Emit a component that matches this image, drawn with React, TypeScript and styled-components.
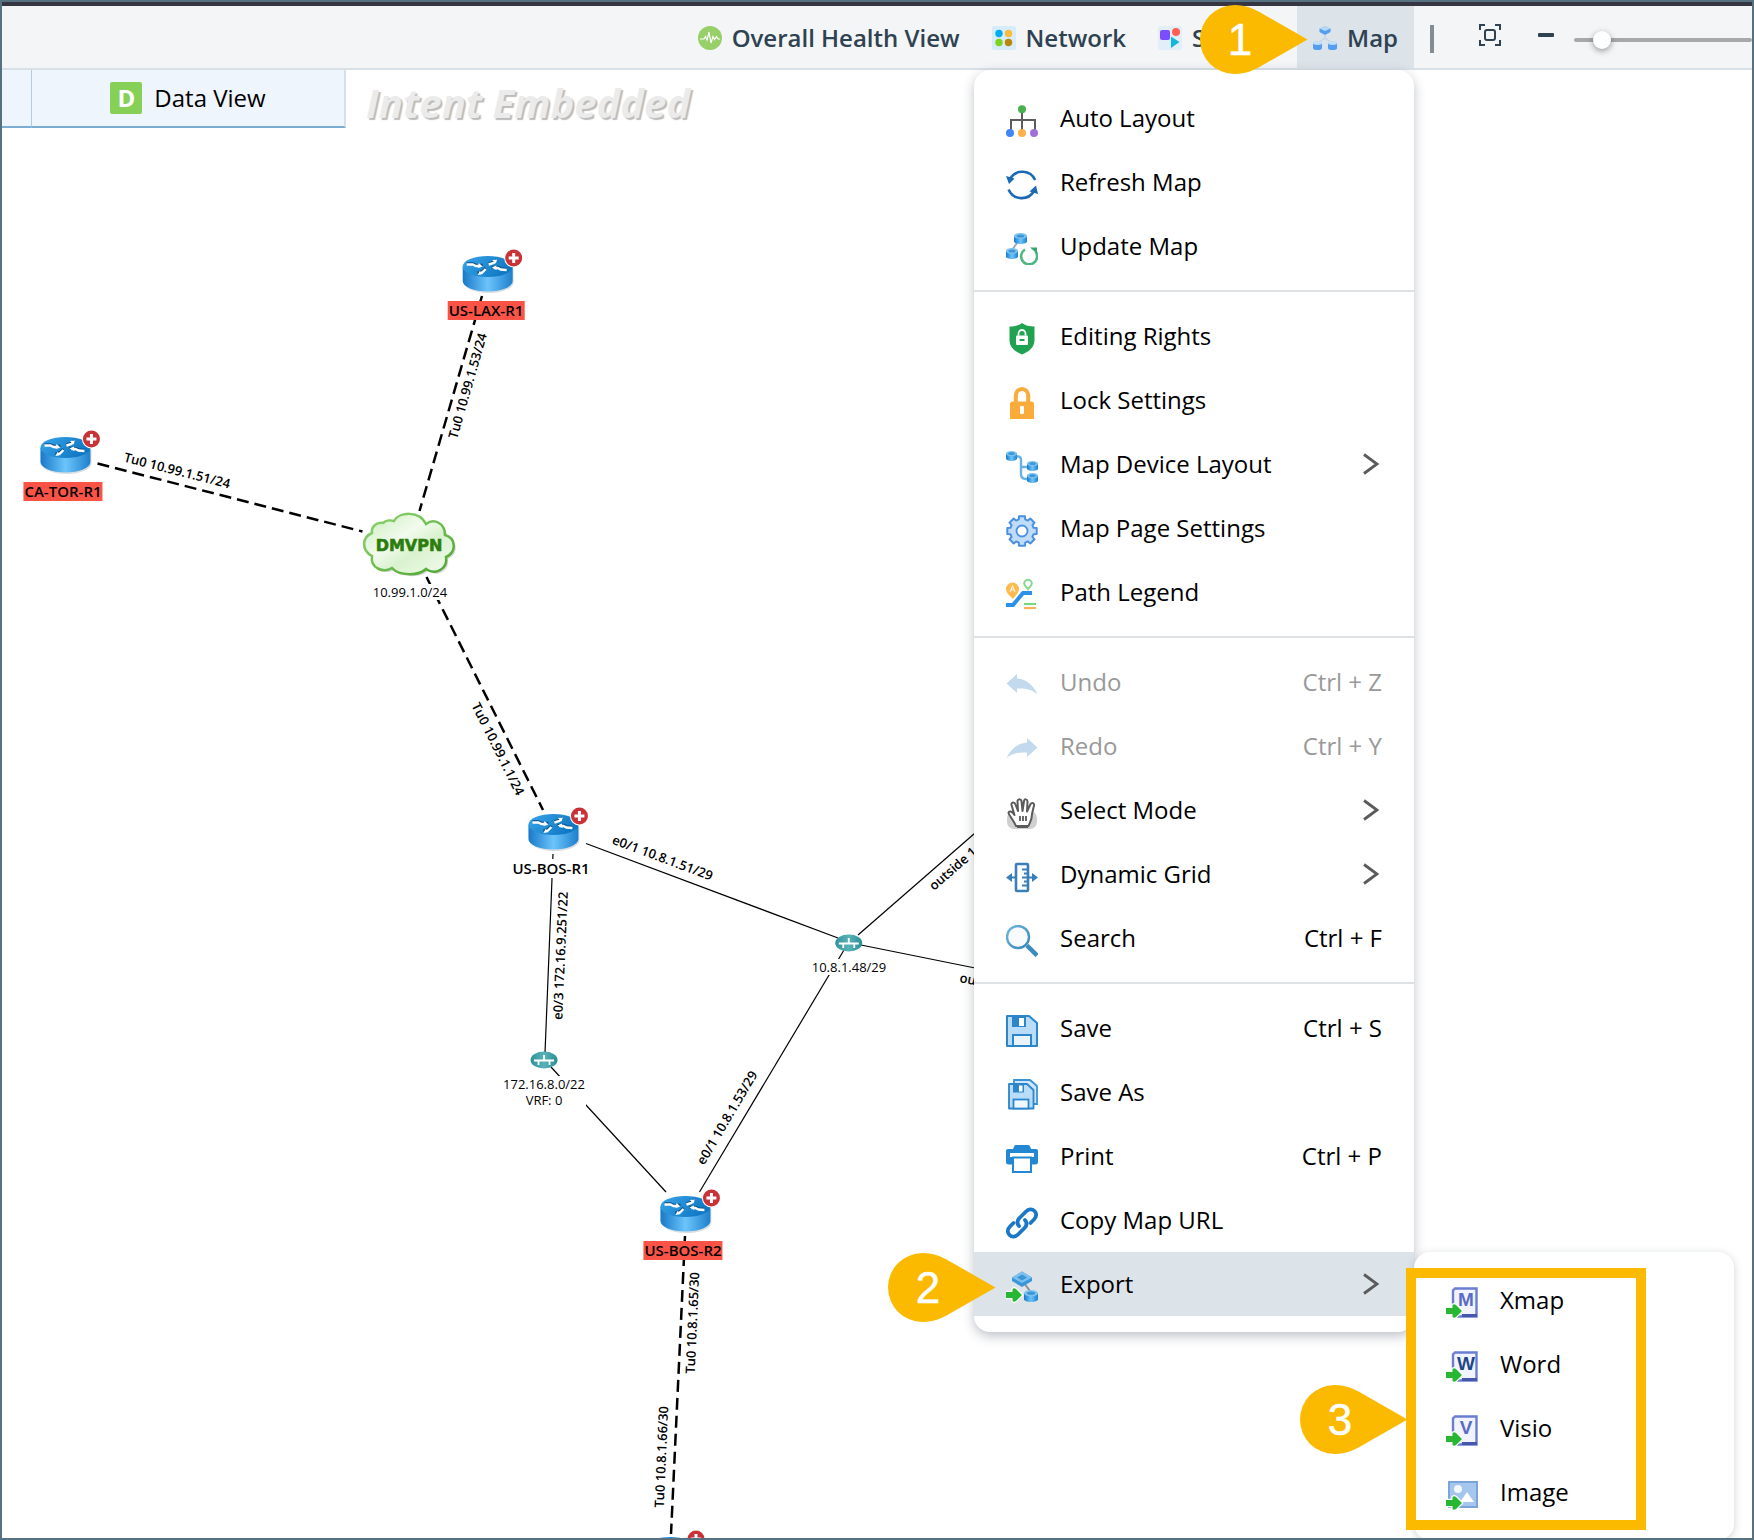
import React from 'react';
import styled, { createGlobalStyle, css } from 'styled-components';

const GlobalStyle = createGlobalStyle`
  *, *::before, *::after { box-sizing: border-box; }
  body { margin: 0; background: #fff; }
  button, input { font: inherit; color: inherit; }
  ul { list-style: none; margin: 0; padding: 0; }
`;

const sans = '"Open Sans", "Noto Sans", sans-serif';
const amber = '#fbb900';

const Page = styled.div`
  position: relative;
  display: flex;
  flex-direction: column;
  height: 100vh;
  padding: 2px;
  overflow: hidden;
  background: #fff;
  color: #000;
  font-family: ${sans};
  font-size: 24px;
  line-height: 32px;
  &::after {
    content: '';
    position: absolute;
    inset: 0;
    z-index: 9;
    border: 2px solid #56717f;
    pointer-events: none;
  }
`;

const Toolbar = styled.header`
  position: relative;
  z-index: 2;
  display: flex;
  justify-content: flex-end;
  height: 68px;
  border-top: 4px solid #363642;
  border-bottom: 2px solid #d9e1e8;
  background: #f3f5f7;
  color: #2f4251;
  font-weight: 600;
`;

const ToolNav = styled.nav`
  display: flex;
`;

const ToolButton = styled.button<{ $active?: boolean; $wide?: boolean }>`
  display: flex;
  align-items: center;
  gap: 10px;
  height: 100%;
  min-width: ${(p) => (p.$wide ? '155px' : '0')};
  padding: 2px 16px 0;
  border: 0;
  background: ${(p) => (p.$active ? '#dce3e9' : 'transparent')};
  white-space: nowrap;
`;

const Anchor = styled.div`
  position: relative;
`;

const ZoomGroup = styled.div`
  display: flex;
  align-items: center;
  flex: none;
  width: 338px;
  padding-left: 16px;
`;

const Divider = styled.span`
  width: 4px;
  height: 28px;
  margin: 4px 45px 0 0;
  background: #848d94;
`;

const IconButton = styled.button`
  display: flex;
  padding: 0;
  border: 0;
  background: none;
`;

const FitButton = styled(IconButton)`
  margin: 0 37px 4px 0;
`;

const MinusButton = styled(IconButton)`
  margin: 0 20px 4px 0;
`;

const Slider = styled.input`
  flex: 1;
  min-width: 0;
  height: 24px;
  margin: 6px 0 0;
  appearance: none;
  background: none;
  &::-webkit-slider-runnable-track {
    height: 4px;
    border-radius: 2px;
    background: #a6a8a9;
  }
  &::-webkit-slider-thumb {
    appearance: none;
    width: 18px;
    height: 18px;
    margin-top: -7px;
    border-radius: 9px;
    background: #fff;
    box-shadow: 0 2px 6px rgba(0, 0, 0, 0.4);
  }
`;

const Subheader = styled.div`
  position: relative;
  z-index: 1;
  display: flex;
  align-items: flex-start;
`;

const Tab = styled.button<{ $stub?: boolean }>`
  display: flex;
  align-items: center;
  justify-content: center;
  gap: 12px;
  width: ${(p) => (p.$stub ? '30px' : '314px')};
  height: 58px;
  padding: 0;
  border: 0;
  border-right: ${(p) => (p.$stub ? '1px solid #adcbe2' : '2px solid #d5e1ea')};
  border-bottom: 2px solid #7badd5;
  background: #eef5fc;
`;

const TabBadge = styled.span`
  display: grid;
  place-items: center;
  width: 32px;
  height: 32px;
  border-radius: 2px;
  background: #87d058;
  color: #fff;
  font-weight: 700;
`;

const Watermark = styled.span`
  margin-left: 20px;
  padding-top: 6px;
  color: #ebebeb;
  font-size: 40px;
  font-style: italic;
  font-weight: 700;
  line-height: 54px;
  text-shadow: 2px 2px 1px #bcbcbc;
`;

/* ---------- menus ---------- */

const panel = css`
  position: absolute;
  padding: 16px 0;
  border-radius: 16px;
  background: #fff;
  box-shadow: 0 4px 12px rgba(40, 50, 70, 0.3);
  color: #000;
  font-weight: 400;
`;

const Menu = styled.div`
  ${panel}
  top: calc(100% + 2px);
  right: 0;
  width: 440px;
`;

const Submenu = styled.ul`
  &&& {
    ${panel}
    top: 0;
    left: 100%;
    width: 320px;
    box-shadow: 0 2px 8px rgba(40, 50, 70, 0.22);
  }
`;

const MenuGroup = styled.ul`
  & + & {
    margin-top: 12px;
    padding-top: 12px;
    border-top: 2px solid #dee2e5;
  }
`;

const MenuRow = styled.li`
  position: relative;
`;

const MenuButton = styled.button<{ $active?: boolean }>`
  display: flex;
  align-items: center;
  gap: 22px;
  width: 100%;
  height: 64px;
  padding: 0 32px;
  border: 0;
  background: ${(p) => (p.$active ? '#dce3e9' : 'transparent')};
  text-align: left;
  &:disabled {
    color: #999;
  }
`;

const MenuIcon = styled.span`
  display: flex;
  padding-top: 6px;
`;

const MenuLabel = styled.span`
  flex: 1;
`;

const Chevron = styled.span`
  display: flex;
  margin-right: 3px;
`;

/* ---------- callouts ---------- */

const Pin = styled.span<{ $left: number; $top: number }>`
  position: absolute;
  z-index: 4;
  left: ${(p) => p.$left}px;
  top: ${(p) => p.$top}px;
  display: flex;
  pointer-events: none;
`;

const Highlight = styled.li`
  position: absolute;
  inset: 16px 88px 10px -8px;
  border: 10px solid ${amber};
  pointer-events: none;
`;

/* ---------- topology ---------- */

const Topology = styled.main`
  position: absolute;
  inset: 0;
  overflow: hidden;
`;

const Links = styled.svg`
  position: absolute;
  inset: 0;
  width: 100%;
  height: 100%;
`;

const LinkText = styled.text`
  font-size: 13px;
  font-weight: 600;
`;

const Node = styled.div<{ $x: number; $y: number }>`
  position: absolute;
  left: ${(p) => p.$x}px;
  top: ${(p) => p.$y}px;
  display: flex;
  flex-direction: column;
  align-items: center;
  gap: 7px;
  transform: translateX(-50%);
`;

const DeviceName = styled.span<{ $alert?: boolean }>`
  margin-right: 8px;
  padding: 0 1px;
  background: ${(p) => (p.$alert ? '#fc5347' : '#fff')};
  font-size: 15px;
  font-weight: 600;
  line-height: 19px;
  white-space: nowrap;
`;

const SubnetName = styled.span`
  padding: 0 1px;
  background: #fff;
  font-size: 13px;
  line-height: 16px;
  text-align: center;
  white-space: pre;
`;

/* ---------- drawings ---------- */

const Svg = ({ children, size = 32 }: { children: React.ReactNode; size?: number }) => (
  <svg width={size} height={size} viewBox={`0 0 ${size} ${size}`} fill="none" aria-hidden="true">
    {children}
  </svg>
);

const Gradients = styled.svg`
  position: absolute;
`;

const Defs = () => (
  <Gradients width="0" height="0" aria-hidden="true">
    <defs>
      <linearGradient id="side" x1="0" x2="1" y1="0" y2="0">
        <stop offset="0" stopColor="#1879c8" />
        <stop offset="0.5" stopColor="#6cc4fb" />
        <stop offset="1" stopColor="#1d80cc" />
      </linearGradient>
      <linearGradient id="lid" x1="0" x2="1" y1="0" y2="0.4">
        <stop offset="0" stopColor="#38a5e8" />
        <stop offset="1" stopColor="#0f78c4" />
      </linearGradient>
      <linearGradient id="cloud" x1="0" x2="1" y1="0" y2="1">
        <stop offset="0" stopColor="#c8edb8" />
        <stop offset="0.4" stopColor="#f2fbee" />
        <stop offset="0.6" stopColor="#d9f2ce" />
        <stop offset="1" stopColor="#f4fcf0" />
      </linearGradient>
      <linearGradient id="cloudEdge" x1="0" x2="1" y1="0" y2="1">
        <stop offset="0" stopColor="#8fd472" />
        <stop offset="1" stopColor="#4da52f" />
      </linearGradient>
      <linearGradient id="teal" x1="0" x2="1" y1="0" y2="0">
        <stop offset="0" stopColor="#2f9299" />
        <stop offset="0.5" stopColor="#58b3b8" />
        <stop offset="1" stopColor="#2b8d94" />
      </linearGradient>
      <linearGradient id="lens" x1="0" x2="1" y1="0" y2="1">
        <stop offset="0" stopColor="#6cb8e0" />
        <stop offset="1" stopColor="#3585b8" />
      </linearGradient>
    </defs>
  </Gradients>
);

const Drum = ({ x, y, w = 12, h = 10 }: { x: number; y: number; w?: number; h?: number }) => (
  <g transform={`translate(${x} ${y})`}>
    <path d={`M0 ${h * 0.25} V${h * 0.78} A${w / 2} ${h * 0.22} 0 0 0 ${w} ${h * 0.78} V${h * 0.25} Z`} fill="url(#side)" />
    <ellipse cx={w / 2} cy={h * 0.27} rx={w / 2} ry={h * 0.27} fill="#7cc3f2" />
    <ellipse cx={w / 2} cy={h * 0.27} rx={w / 3.4} ry={h * 0.14} fill="#3c96d8" />
  </g>
);

const GreenArrow = () => (
  <path
    d="M0 21 H6.500 V18 Q8 16.500 10 18 L16 24 L10 30 Q8 31.500 6.500 30 V27 H0 Z"
    fill="#27b732"
    stroke="#fff"
    strokeWidth="2.400"
    paintOrder="stroke"
  />
);

const gearPath = (() => {
  const pts: string[] = [];
  for (let i = 0; i < 8; i += 1) {
    const base = (i * Math.PI) / 4 - Math.PI / 2;
    [[-0.27, 12], [-0.2, 15], [0.2, 15], [0.27, 12]].forEach(([a, r]) => {
      pts.push(`${(16 + r * Math.cos(base + a)).toFixed(1)} ${(16 + r * Math.sin(base + a)).toFixed(1)}`);
    });
  }
  return `M${pts.join(' L')} Z`;
})();

const Doc = ({ letter, ink }: { letter: string; ink: string }) => (
  <Svg>
    <path d="M9 1.5 H30.5 V29.5 H7 V3.5 Z" fill="#f1f4ff" stroke="#6a7dd0" strokeWidth="2.4" />
    <path d="M16 28.5 H31" stroke="#4657b0" strokeWidth="3" />
    <text x="20" y="19" textAnchor="middle" fontFamily="Liberation Sans, sans-serif" fontSize="19" fontWeight="700" fill={ink}>
      {letter}
    </text>
    <GreenArrow />
  </Svg>
);

const icons = {
  auto: (
    <Svg>
      <path d="M16 6 V26 M5 26 V15 H29 V26" stroke="#5c5c5c" strokeWidth="2" />
      <circle cx="16" cy="4.2" r="4" fill="#4caf50" />
      <circle cx="4" cy="28" r="4" fill="#4285f4" />
      <circle cx="16" cy="28" r="4" fill="#ffb04a" />
      <circle cx="28" cy="28" r="4" fill="#a070d8" />
    </Svg>
  ),
  refresh: (
    <Svg>
      <path d="M4.2 9.5 A14.2 14.2 0 0 1 29.2 11 M2.6 20.5 A14.2 14.2 0 0 0 28 22" stroke="#1b69b6" strokeWidth="2.6" />
      <path d="M0 7 L8.5 9.5 L3 15 Z M32 25 L23.5 22.500 L30 16.500 Z" fill="#1b69b6" />
    </Svg>
  ),
  update: (
    <Svg>
      <path d="M11 10 L6 17" stroke="#9ab" strokeWidth="2" />
      <Drum x={8} y={0} w={13} h={11} />
      <Drum x={0} y={15} w={12} h={11} />
      <path d="M19 16.500 A8 8 0 1 0 29.500 18.500" stroke="#4fb783" strokeWidth="2.600" />
      <path d="M24 14.500 H31 V20.500 Z" fill="#35a56f" />
    </Svg>
  ),
  shield: (
    <Svg>
      <path d="M16 0 C19 2.500 23 3.500 28.500 3.500 V17 C28.500 25 22 29 16 31.500 C10 29 3.500 25 3.500 17 V3.500 C9 3.500 13 2.500 16 0 Z" fill="#1fa350" />
      <path d="M12.500 12.500 V10.500 A3.500 3.500 0 0 1 19.500 10.500 V12.500" stroke="#fff" strokeWidth="1.800" />
      <rect x="10" y="12.500" width="12" height="9.500" rx="1" fill="#fff" />
      <path d="M13.500 17 H18.500" stroke="#1fa350" strokeWidth="2" />
    </Svg>
  ),
  lock: (
    <Svg>
      <path d="M9.800 16 V8.500 A6.200 6.500 0 0 1 22.200 8.500 V16" stroke="#fbab3a" strokeWidth="4" />
      <path d="M4 17 Q4 14.500 6.500 14.500 H25.500 Q28 14.500 28 17 V32 H4 Z" fill="#fbab3a" />
      <rect x="14" y="19" width="4" height="8" rx="1" fill="#fff" />
    </Svg>
  ),
  layout: (
    <Svg>
      <path d="M9 5.500 H12 Q15 5.500 15 9 V23 Q15 28 20 28 H24 M15 16 H24" stroke="#69b3e4" strokeWidth="2.400" />
      <Drum x={0} y={0} w={11} h={10} />
      <Drum x={21} y={10} w={11} h={10} />
      <Drum x={21} y={22} w={11} h={10} />
    </Svg>
  ),
  gear: (
    <Svg>
      <path d={gearPath} fill="#bfdcfa" stroke="#4b90e0" strokeWidth="2" strokeLinejoin="round" />
      <circle cx="16" cy="16" r="5.500" fill="#fff" stroke="#4b90e0" strokeWidth="1.800" />
    </Svg>
  ),
  path: (
    <Svg>
      <path d="M6.500 3.500 A6.500 6.500 0 0 1 13 10 C13 14 9 17 7 20 C4 17 0 14 0 10 A6.500 6.500 0 0 1 6.500 3.500 Z" fill="#fdbb4d" />
      <path d="M4 13 L6.500 7 L9 13 M5 11 H8" stroke="#fff3dc" strokeWidth="1.200" />
      <path d="M22 0.800 A3.800 3.800 0 0 1 25.800 4.600 C25.800 7 23 8 22 10 C21 8 18.200 7 18.200 4.600 A3.800 3.800 0 0 1 22 0.800 Z" stroke="#86d88f" strokeWidth="2" />
      <path d="M0 26 H7 L17 14 H26" stroke="#2992e6" strokeWidth="4" />
      <path d="M18 25 H30" stroke="#7bd67e" strokeWidth="2.200" />
      <path d="M18 29 H30" stroke="#f9b25c" strokeWidth="2.200" />
    </Svg>
  ),
  undo: (
    <Svg>
      <path d="M0.500 14.500 L11 5 V9.500 C20 10 27 16 31.500 25 C25 20 19 19 11 19.500 V24 Z" fill="#c3daee" />
    </Svg>
  ),
  redo: (
    <Svg>
      <path d="M31.500 14.500 L21 5 V9.500 C12 10 5 16 0.500 25 C7 20 13 19 21 19.500 V24 Z" fill="#c3daee" />
    </Svg>
  ),
  hand: (
    <Svg>
      <rect x="1" y="14" width="30" height="18" rx="7" fill="#d0d0d0" />
      <path
        d="M10 29 C8 24 3.500 19 2.500 16 C3 13.500 6 14 8.500 18 L5.500 8 C5 5 8.500 4.500 9.500 7.500 L12 14 L11.500 4 C12 1.500 15 1.500 15.500 4 L16.500 14 L18 4 C18.500 1.500 21.500 2 21.500 4.500 L21 14.500 L24.500 7 C26 5 28.500 6 28 8.500 L26 17 C26 23 24 25 22.500 29 Z"
        fill="#fff"
        stroke="#5a5a5a"
        strokeWidth="2"
        strokeLinejoin="round"
      />
      <path d="M14 19 V24 M17 19 V24 M20 19 V24 M11 30 H22" stroke="#5a5a5a" strokeWidth="1.800" />
    </Svg>
  ),
  grid: (
    <Svg>
      <rect x="10" y="3" width="12" height="27" rx="1" stroke="#3b7fb8" strokeWidth="2.600" />
      <path d="M16 8.500 H22 M18 12.500 H22 M16 16.500 H22 M18 20.500 H22 M16 24.500 H22" stroke="#3b7fb8" strokeWidth="1.800" />
      <path d="M3 16.500 H10 M22 16.500 H29" stroke="#3b7fb8" strokeWidth="2" />
      <path d="M0 16.500 L6 12 V21 Z M32 16.500 L26 12 V21 Z" fill="#3b7fb8" />
    </Svg>
  ),
  search: (
    <Svg>
      <path d="M21 20.500 L31 30.500" stroke="#3d8bbd" strokeWidth="4.500" />
      <circle cx="12" cy="12" r="11" fill="#f7fbfe" stroke="url(#lens)" strokeWidth="2.400" />
    </Svg>
  ),
  save: (
    <Svg>
      <path d="M1 1 H23 L31 8 V31 H1 Z" fill="#b9dcfb" stroke="#2b86cc" strokeWidth="2" strokeLinejoin="round" />
      <path d="M6 1 H20 V12 H6 Z" fill="#2b86cc" />
      <rect x="13" y="3" width="5" height="8" fill="#fff" />
      <rect x="7" y="20" width="18" height="11" fill="#e9f4fe" stroke="#2b86cc" strokeWidth="2" />
    </Svg>
  ),
  saveAs: (
    <Svg>
      <path d="M8 5 V1 H24 L31 7 V25 H27" fill="#cfe6fb" stroke="#3b93d6" strokeWidth="1.800" />
      <path d="M3 5 H21 L27.500 11 V29.500 H3 Z" fill="#b9dcfb" stroke="#2b86cc" strokeWidth="1.800" strokeLinejoin="round" />
      <path d="M7 5 H18 V13.500 H7 Z" fill="#2b86cc" />
      <rect x="13" y="6.500" width="3.500" height="6" fill="#fff" />
      <rect x="7.500" y="20.500" width="15" height="9" fill="#f0f8ff" stroke="#2b86cc" strokeWidth="1.800" />
    </Svg>
  ),
  print: (
    <Svg>
      <path d="M8 4 Q8 2 10 2 H22 Q24 2 25 6 H30 Q32 6 32 8 V19 Q32 21.500 29 21.500 H3 Q0 21.500 0 19 V8 Q0 6 2 6 H7 Z" fill="#2387d2" />
      <path d="M4 10 H28 V14 H4 Z" fill="#fff" />
      <rect x="7" y="14.500" width="18" height="14.500" fill="#fff" stroke="#2387d2" strokeWidth="2" />
    </Svg>
  ),
  link: (
    <Svg>
      <g stroke="#1a78c8" strokeWidth="3.800" strokeLinecap="round">
        <path d="M13 19 C10.500 16 11.500 13 13.500 11 L20 4.500 C22.500 2 26 1.500 28.500 4 C31 6.500 30.500 10 28 12.500 L24.500 16" />
        <path d="M19 13 C21.500 16 20.500 19 18.500 21 L12 27.500 C9.500 30 6 30.500 3.500 28 C1 25.500 1.500 22 4 19.500 L7.500 16" />
      </g>
    </Svg>
  ),
  export: (
    <Svg>
      <path d="M18 12 L24 20" stroke="#8a8f96" strokeWidth="2" />
      <path d="M6 6.500 L16 0.500 L26 6.500 V10 L16 16 L6 10 Z" fill="#3a96da" />
      <path d="M6 6.500 L16 0.500 L26 6.500 L16 12 Z" fill="#7dc0ee" />
      <path d="M11 6.500 L16 3.500 L21 6.500 L16 9.500 Z" fill="#3a96da" />
      <Drum x={18} y={19} w={14} h={12} />
      <GreenArrow />
    </Svg>
  ),
  xmap: <Doc letter="M" ink="#5a6cc4" />,
  word: <Doc letter="W" ink="#1f4788" />,
  visio: <Doc letter="V" ink="#5a6cc4" />,
  image: (
    <Svg>
      <rect x="3" y="3" width="28" height="25" fill="#a5c6ee" stroke="#7ba4d8" strokeWidth="2" />
      <circle cx="12" cy="10" r="4" fill="#f4f9ff" />
      <path d="M14 23 L21 13 L28 23 Z" fill="#fff" />
      <GreenArrow />
    </Svg>
  ),
};

const health = (
  <Svg size={24}>
    <circle cx="12" cy="12" r="12" fill="#97cf68" />
    <path d="M2 13 H6 L7.500 10.500 L9 14 L11 6 L13 17 L15 10.500 L16.500 13.500 L18.500 10.500 L20 13 H22" stroke="#fff" strokeWidth="1.200" />
  </Svg>
);
const network = (
  <Svg size={24}>
    <rect width="24" height="24" rx="2" fill="#d6ecf8" />
    <circle cx="7" cy="7.500" r="3.700" fill="#00aeef" />
    <circle cx="16.500" cy="7.500" r="3.700" fill="#fdb93a" />
    <circle cx="7" cy="16.500" r="3.700" fill="#7ed321" />
    <circle cx="16.500" cy="16.500" r="3.700" fill="#b8860b" />
  </Svg>
);
const shapes = (
  <Svg size={24}>
    <rect width="24" height="24" rx="2" fill="#e2effb" />
    <rect x="2" y="4" width="10" height="10" rx="2" fill="#7c4dff" />
    <circle cx="18" cy="6" r="4" fill="#ff5f52" />
    <path d="M13 10.500 L21.500 16 L13 22 Z" fill="#12b5dc" />
  </Svg>
);
const mapIcon = (
  <Svg size={24}>
    <path d="M12 9 V12 L5 17 M12 12 L19 17" stroke="#b9cfe6" strokeWidth="1" />
    <path d="M6.500 2.500 L12 0.500 L17.500 2.500 V6 L12 9 L6.500 6 Z" fill="#559df0" />
    <path d="M6.500 2.500 L12 0.500 L17.500 2.500 L12 5 Z" fill="#b5d8fb" />
    {[0, 15].map((x) => (
      <g key={x} transform={`translate(${x} 15)`}>
        <path d="M0 2 V7 A4.500 2 0 0 0 9 7 V2 Z" fill="#559df0" />
        <ellipse cx="4.500" cy="2" rx="4.500" ry="1.900" fill="#c3dffb" />
      </g>
    ))}
  </Svg>
);

const Callout = ({ n, left, top }: { n: number; left: number; top: number }) => (
  <Pin $left={left} $top={top}>
    <svg width="108" height="69" viewBox="0 0 108 69">
      <path d="M34.500 0 C46 0 54 4 62 8.500 L107.500 34.500 L62 60.500 C54 65 46 69 34.500 69 A34.500 34.500 0 0 1 34.500 0 Z" fill={amber} />
      <text x="40" y="50" textAnchor="middle" fontFamily="Liberation Sans, Arial, sans-serif" fontSize="44" fontWeight="400" fill="#fff" stroke="#fff" strokeWidth="0.500">
        {n}
      </text>
    </svg>
  </Pin>
);

const RouterArt = () => (
  <svg width="70" height="46" viewBox="-8 -8 70 46" aria-hidden="true">
    <path d="M1 13 V26 A25 10.500 0 0 0 51 27 V13 Z" fill="#9aa4ad" opacity="0.35" />
    <path d="M0 11 V25 A25 10.500 0 0 0 50 25 V11 Z" fill="url(#side)" />
    <ellipse cx="25" cy="10.500" rx="25" ry="10.500" fill="url(#lid)" />
    <g fill="none" stroke="#0d4f86" strokeWidth="2.600" transform="translate(0 -1)">
      <path d="M4 8.500 L10 8.500 L13 10 L20 10 M44 14 L38 13.500 L35 12 L29 12 M26 8.500 L31 7 L34 4.500 M23 13 L20 16 L15 18" />
    </g>
    <g fill="none" stroke="#fff" strokeWidth="2.400">
      <path d="M4 8.500 L10 8.500 L13 10 L18 10 M44 14 L38 13.500 L35 12 L31 12 M26 8.500 L31 7 L33 5 M23 13 L20 16 L17 17.500" />
    </g>
    <path d="M16 7 L20 10.500 L15 12 Z M29 11.500 L33.500 9.500 L34 14 Z M34.500 3.500 L29.500 4 L33 7.500 Z M15 19 L20.500 18 L17 15 Z" fill="#fff" />
    <circle cx="51" cy="2" r="9.500" fill="#fff" />
    <circle cx="51" cy="2" r="8.500" fill="#c93236" />
    <path d="M51 -3 V7 M46 2 H56" stroke="#fff" strokeWidth="3" />
  </svg>
);

const cloudOutline =
  'M21 12 C24 9 29 9 32 10 C37 1 57 -1 64 13 C72 7 83 12 83 24 C94 27 95 41 84 46 C86 57 74 65 64 58 C57 65 37 65 30 57 C22 62 8 58 10 45 C-1 39 0 26 10 22 C9 16 14 11 21 12 Z';

const CloudArt = () => (
  <svg width="96" height="66" viewBox="0 0 96 66" aria-hidden="true">
    <path d={cloudOutline} fill="#999" opacity="0.4" transform="translate(2 2)" />
    <path d={cloudOutline} fill="url(#cloud)" stroke="url(#cloudEdge)" strokeWidth="2.500" />
    <text x="47" y="40" textAnchor="middle" fontFamily="DejaVu Sans, sans-serif" fontSize="16" fontWeight="700" fill="#2c7d0c" stroke="#2c7d0c" strokeWidth="0.600">
      DMVPN
    </text>
  </svg>
);

const SwitchArt = () => (
  <svg width="28" height="18" viewBox="0 0 28 18" aria-hidden="true">
    <ellipse cx="14" cy="9" rx="13.500" ry="8.500" fill="url(#teal)" />
    <path d="M4 9.500 H24 M14 4 V9.500 M8.500 9.500 V14 M19.500 9.500 V14" stroke="#fff" strokeWidth="1.800" />
  </svg>
);

/* ---------- data ---------- */

type Item = { icon: keyof typeof icons; label: string; keys?: string; more?: boolean; disabled?: boolean };

const groups: Item[][] = [
  [
    { icon: 'auto', label: 'Auto Layout' },
    { icon: 'refresh', label: 'Refresh Map' },
    { icon: 'update', label: 'Update Map' },
  ],
  [
    { icon: 'shield', label: 'Editing Rights' },
    { icon: 'lock', label: 'Lock Settings' },
    { icon: 'layout', label: 'Map Device Layout', more: true },
    { icon: 'gear', label: 'Map Page Settings' },
    { icon: 'path', label: 'Path Legend' },
  ],
  [
    { icon: 'undo', label: 'Undo', keys: 'Ctrl + Z', disabled: true },
    { icon: 'redo', label: 'Redo', keys: 'Ctrl + Y', disabled: true },
    { icon: 'hand', label: 'Select Mode', more: true },
    { icon: 'grid', label: 'Dynamic Grid', more: true },
    { icon: 'search', label: 'Search', keys: 'Ctrl + F' },
  ],
  [
    { icon: 'save', label: 'Save', keys: 'Ctrl + S' },
    { icon: 'saveAs', label: 'Save As' },
    { icon: 'print', label: 'Print', keys: 'Ctrl + P' },
    { icon: 'link', label: 'Copy Map URL' },
    { icon: 'export', label: 'Export', more: true },
  ],
];

const formats: Item[] = [
  { icon: 'xmap', label: 'Xmap' },
  { icon: 'word', label: 'Word' },
  { icon: 'visio', label: 'Visio' },
  { icon: 'image', label: 'Image' },
];

const routers = [
  { x: 490, y: 248, name: 'US-LAX-R1', alert: true },
  { x: 67, y: 429, name: 'CA-TOR-R1', alert: true },
  { x: 555, y: 806, name: 'US-BOS-R1', alert: false },
  { x: 687, y: 1188, name: 'US-BOS-R2', alert: true },
  { x: 672, y: 1529, name: '', alert: false },
];

const subnets = [
  { x: 849, y: 934, name: '10.8.1.48/29' },
  { x: 544, y: 1051, name: '172.16.8.0/22\nVRF: 0' },
];

const tunnels = [
  'M97.500 463.500 L362.500 531.500',
  'M482 296 L419.500 511',
  'M426.500 577 L543 810',
  'M685 1236 L671 1534',
];

const wires = [
  'M553 854 L545 1053',
  'M586 843.500 L838 938',
  'M858 935 L990 820',
  'M861 945 L990 971',
  'M844 950 L699.500 1192',
  'M551 1067 L666 1192',
];

const linkLabels: { x: number; y: number; a: number; t: string; start?: boolean }[] = [
  { x: 176, y: 475, a: 14.3, t: 'Tu0 10.99.1.51/24' },
  { x: 472, y: 387, a: -74, t: 'Tu0 10.99.1.53/24' },
  { x: 494, y: 751, a: 63.5, t: 'Tu0 10.99.1.1/24' },
  { x: 565, y: 956, a: -87.5, t: 'e0/3 172.16.9.251/22' },
  { x: 661, y: 862, a: 20.5, t: 'e0/1 10.8.1.51/29' },
  { x: 731, y: 1120, a: -59.5, t: 'e0/1 10.8.1.53/29' },
  { x: 697, y: 1323, a: -87.5, t: 'Tu0 10.8.1.65/30' },
  { x: 666, y: 1457, a: -87.5, t: 'Tu0 10.8.1.66/30' },
  { x: 934, y: 891, a: -41, t: 'outside 1', start: true },
  { x: 959, y: 982, a: 11.5, t: 'ou', start: true },
];

const Entry = ({ item, children }: { item: Item; children?: React.ReactNode }) => (
  <MenuRow>
    <MenuButton type="button" disabled={item.disabled} $active={item.label === 'Export'}>
      <MenuIcon>{icons[item.icon]}</MenuIcon>
      <MenuLabel>{item.label}</MenuLabel>
      {item.keys && <span>{item.keys}</span>}
      {item.more && (
        <Chevron>
          <svg width="16" height="22" viewBox="0 0 16 22" fill="none" aria-hidden="true">
            <path d="M1 1.500 L14 11 L1 20.500" stroke="#5a5a5a" strokeWidth="2.800" />
          </svg>
        </Chevron>
      )}
    </MenuButton>
    {children}
  </MenuRow>
);

const App = () => (
  <Page>
    <GlobalStyle />
    <Defs />
    <Topology>
      <Links>
        {tunnels.map((d) => (
          <path key={d} d={d} stroke="#000" strokeWidth="2.500" strokeDasharray="12 6" />
        ))}
        {wires.map((d) => (
          <path key={d} d={d} stroke="#000" strokeWidth="1.200" />
        ))}
        {linkLabels.map((l) => (
          <LinkText key={l.t} textAnchor={l.start ? 'start' : 'middle'} transform={`translate(${l.x} ${l.y}) rotate(${l.a})`}>
            {l.t}
          </LinkText>
        ))}
      </Links>
      {routers.map((r) => (
        <Node key={r.y} $x={r.x} $y={r.y}>
          <RouterArt />
          {r.name && <DeviceName $alert={r.alert}>{r.name}</DeviceName>}
        </Node>
      ))}
      <Node $x={410} $y={511}>
        <CloudArt />
        <SubnetName>10.99.1.0/24</SubnetName>
      </Node>
      {subnets.map((s) => (
        <Node key={s.name} $x={s.x} $y={s.y}>
          <SwitchArt />
          <SubnetName>{s.name}</SubnetName>
        </Node>
      ))}
    </Topology>

    <Toolbar>
      <ToolNav>
        <ToolButton type="button">{health}Overall Health View</ToolButton>
        <ToolButton type="button">{network}Network</ToolButton>
        <ToolButton type="button" $wide>{shapes}S</ToolButton>
        <Anchor>
          <ToolButton type="button" $active>{mapIcon}Map</ToolButton>
          <Callout n={1} left={-97} top={-1} />
          <Menu>
            {groups.map((g) => (
              <MenuGroup key={g[0].label}>
                {g.map((item) => (
                  <Entry key={item.label} item={item}>
                    {item.label === 'Export' && (
                      <>
                        <Callout n={2} left={-86} top={1} />
                        <Submenu>
                          {formats.map((f) => (
                            <Entry key={f.label} item={f} />
                          ))}
                          <Highlight aria-hidden="true" />
                          <Callout n={3} left={-114} top={133} />
                        </Submenu>
                      </>
                    )}
                  </Entry>
                ))}
              </MenuGroup>
            ))}
          </Menu>
        </Anchor>
      </ToolNav>
      <ZoomGroup>
        <Divider />
        <FitButton type="button" aria-label="Fit to screen">
          <svg width="22" height="22" viewBox="0 0 22 22" fill="none" stroke="#2f4251" strokeWidth="2">
            <path d="M1 6 V1 H6 M16 1 H21 V6 M21 16 V21 H16 M6 21 H1 V16" />
            <rect x="6" y="6" width="10" height="10" rx="2" />
          </svg>
        </FitButton>
        <MinusButton type="button" aria-label="Zoom out">
          <svg width="16" height="4" viewBox="0 0 16 4">
            <rect width="16" height="4" rx="1" fill="#2f4251" />
          </svg>
        </MinusButton>
        <Slider type="range" aria-label="Zoom" min={0} max={100} defaultValue={12} />
      </ZoomGroup>
    </Toolbar>

    <Subheader>
      <Tab type="button" $stub aria-label="Previous view" />
      <Tab type="button">
        <TabBadge>D</TabBadge>
        Data View
      </Tab>
      <Watermark>Intent Embedded</Watermark>
    </Subheader>
  </Page>
);

export default App;
